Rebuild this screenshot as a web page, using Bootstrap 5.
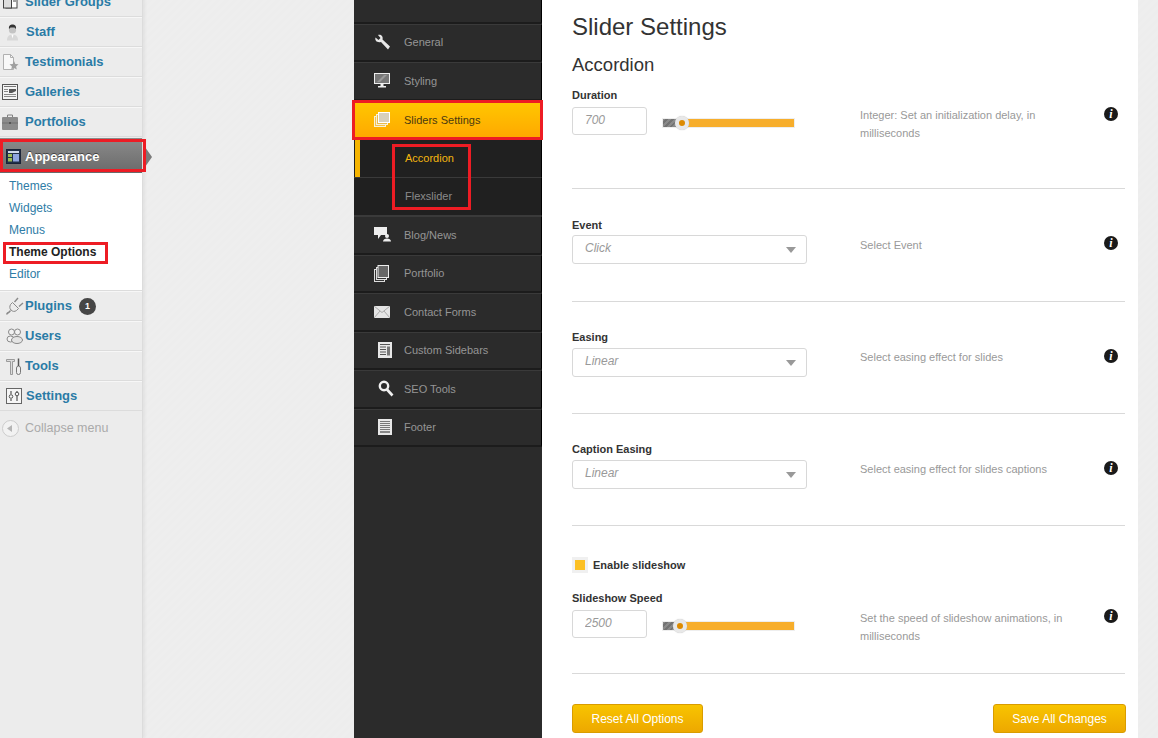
<!DOCTYPE html>
<html lang="en">
<head>
    <meta charset="UTF-8">
    <title>Theme Options - Slider Settings</title>
    <link href="https://cdn.jsdelivr.net/npm/bootstrap@5.3.2/dist/css/bootstrap.min.css" rel="stylesheet">
    <style>
        html, body { height: 738px; overflow: hidden; }
        body { font-family: "Liberation Sans", Arial, sans-serif; background: repeating-linear-gradient(135deg, #eeeeee 0 3px, #ededed 3px 6px); }
        .page-wrap { width: 1158px; height: 738px; }

        /* wp admin menu */
        .wp-side { width: 143px; flex: none; background: #ececec; border-right: 1px solid #dcdcdc; box-shadow: 2px 0 3px rgba(0,0,0,.05); margin-top: -13px; height: 751px; }
        .wp-item { height: 30px; display: flex; align-items: center; font-size: 13px; font-weight: bold; color: #2a7ba6; border-top: 1px solid #f7f7f7; border-bottom: 1px solid #dcdcdc; }
        .wp-ico { width: 25px; padding-left: 2px; flex: none; display: flex; }
        .wp-label { margin-left: 1px; }
        .wp-current { height: 35px; margin-top: 1px; padding-top: 2px; background: linear-gradient(#8b8b8b, #6a6a6a); color: #fff; border: 0; text-shadow: 0 -1px 0 #444; }
        .wp-sub { background: #fff; padding: 2px 0 5px; border-bottom: 1px solid #dcdcdc; }
        .wp-sub a { display: block; height: 22px; line-height: 22px; padding-left: 9px; font-size: 12px; color: #2e7ca6; text-decoration: none; }
        .wp-sub a.on { color: #222; font-weight: bold; }
        .wp-count { width: 17px; height: 17px; border-radius: 50%; background: #464646; color: #fff; font-size: 9px; line-height: 17px; text-align: center; margin-left: 7px; }
        .wp-collapse { font-size: 12.5px; font-weight: normal; color: #aaa; border: 0; height: 34px; }
        .wp-arrow { left: 145px; top: 147px; border-left: 7px solid #7b7b7b; border-top: 10px solid transparent; border-bottom: 10px solid transparent; }

        .mid-gap { width: 211px; flex: none; }

        /* theme nav */
        .opt-nav { width: 188px; flex: none; background: #2b2b2b; }
        .opt-nav-top { height: 23.6px; border-bottom: 2px solid #1c1c1c; border-right: 1px solid #000; }
        .opt-nav-row { height: 38.5px; display: flex; align-items: center; font-size: 11px; color: #959595; border-bottom: 2px solid #1c1c1c; border-top: 1px solid #3a3a3a; border-right: 1px solid #000; }
        .opt-nav-ico { width: 50px; padding-left: 20px; flex: none; display: flex; }
        .opt-nav-row.on { background: linear-gradient(#ffc800, #ffa700); color: #4a3a10; border: 0; }
        .opt-nav-sub { height: 38.5px; background: #202020; font-size: 11px; color: #8b8b8b; padding-left: 51px; display: flex; align-items: center; border-bottom: 1px solid #3a3a3a; border-right: 1px solid #000; }
        .opt-nav-sub.on { color: #f4b60f; box-shadow: inset 1px 0 0 #202020, inset 6px 0 0 #f5b400; }

        /* right panel */
        .opt-main { width: 596px; flex: none; background: #fff; padding: 0 13px 0 30px; }
        .opt-title { font-size: 24px; font-weight: normal; color: #333; line-height: 28px; margin: 13px 0 0; }
        .opt-sub { font-size: 18.5px; font-weight: normal; color: #333; line-height: 22px; margin: 13px 0 0; }
        .opt-block { border-bottom: 1px solid #d9d9d9; display: flex; position: relative; }
        .opt-left { width: 288px; flex: none; }
        .opt-desc { width: 210px; flex: none; font-size: 11px; line-height: 18px; color: #999; }
        .opt-label { font-size: 11px; font-weight: bold; color: #333; line-height: 14px; margin: 0 0 3px; display: block; }
        .opt-label.wide { margin-bottom: 5px; }
        .opt-label.mid { margin-bottom: 4px; }
        .opt-input.form-control { width: 75px; height: 28px; padding: 0 12px 2px; font-size: 12px; font-style: italic; color: #999; border: 1px solid #d8d8d8; border-radius: 3px; box-shadow: none; }
        .opt-slider { width: 131px; height: 8px; margin: 4px 0 0 16px; background: #f7ae2c; position: relative; box-shadow: 0 0 0 1px #eee; }
        .opt-slider-fill { height: 8px; background: repeating-linear-gradient(135deg, #8a8a8a 0 2px, #737373 2px 4px); }
        .opt-thumb { position: absolute; top: -3px; width: 14px; height: 14px; margin-left: -7px; border-radius: 50%; background: #dd8a00; border: 4px solid #e8e8e8; box-shadow: 0 0 1px #bbb; }
        .opt-select-wrap { width: 235px; position: relative; }
        .opt-select.form-select { height: 29px; padding: 0 12px 3px; font-size: 12px; font-style: italic; color: #999; border: 1px solid #d8d8d8; border-radius: 3px; background-image: none; box-shadow: none; }
        .opt-select-wrap::after { content: ""; position: absolute; right: 11px; top: 12px; border-top: 6px solid #999; border-left: 5px solid transparent; border-right: 5px solid transparent; }
        .opt-info { position: absolute; left: 532px; width: 14px; height: 14px; border-radius: 50%; background: #1a1a1a; color: #fff; font-family: "Liberation Serif", serif; font-style: italic; font-weight: bold; font-size: 12px; line-height: 14px; text-align: center; }
        .opt-check { width: 16px; height: 16px; background: #f0f0f0; display: flex; align-items: center; justify-content: center; margin-right: 5px; }
        .opt-check span { width: 10px; height: 10px; background: #fcc024; }
        .opt-check-row { font-size: 11px; font-weight: bold; color: #333; display: flex; align-items: center; margin-bottom: 17px; }
        .opt-btn.btn { height: 29px; padding: 0; font-size: 12px; color: #fff; background: linear-gradient(#f8c400, #eda800); border: 1px solid #d99c00; border-radius: 3px; }
        .opt-btn-row { margin-top: 30px; margin-right: -1px; }

        /* red annotation boxes */
        .mark-box { position: absolute; border: 3px solid #ed1c24; pointer-events: none; }
    </style>
</head>
<body>
<div class="page-wrap d-flex position-relative">

    <div class="wp-side">
        <div class="wp-item"><span class="wp-ico"><svg width="18" height="18" viewBox="0 0 18 18"><rect x="4" y="2" width="11" height="13" fill="#fff" stroke="#444"/><rect x="1.500" y="5" width="8" height="10" fill="#ddd" stroke="#444"/><path d="M11 5h3M11 8h3" stroke="#444"/></svg></span>Slider Groups</div>
        <div class="wp-item"><span class="wp-ico"><svg class="ms-1" width="13" height="17" viewBox="0 0 13 17"><path d="M1 16.500c0-4 1.500-5.500 5.500-6 4 .5 5.500 2 5.500 6z" fill="#d8d8d8"/><circle cx="6.500" cy="6" r="3.600" fill="#c4c4c4"/><path d="M3 5c-.5-3.500 1.500-4.500 3.500-4.500S10.500 1.500 10 5L8.500 3.500h-4z" fill="#333"/><path d="M5.500 10.500l1 4 1-4z" fill="#fff"/></svg></span><span class="wp-label">Staff</span></div>
        <div class="wp-item"><span class="wp-ico"><svg width="17" height="17" viewBox="0 0 17 17"><path d="M1.500.5h7l3 3v12h-10z" fill="#f8f8f8" stroke="#b0b0b0"/><path d="M8.500.5v3h3" fill="none" stroke="#b0b0b0"/><path d="M12 7l1.300 3 3.200.3-2.400 2.100.7 3.100-2.800-1.600-2.800 1.600.7-3.100-2.400-2.100 3.200-.3z" fill="#a0a0a0"/></svg></span>Testimonials</div>
        <div class="wp-item"><span class="wp-ico"><svg width="16" height="16" viewBox="0 0 16 16"><rect x=".5" y=".5" width="15" height="15" fill="#f4f4f4" stroke="#555"/><rect x="2" y="2" width="12" height="1" fill="#777"/><path d="M7 9V5h7v2l-4 2z" fill="#555"/><path d="M2 5.500h4M2 7.500h4M2 10.500h12M2 12.500h12" stroke="#888"/></svg></span>Galleries</div>
        <div class="wp-item"><span class="wp-ico"><svg width="16" height="16" viewBox="0 0 16 16"><path d="M5.500 3V1h5v2" fill="none" stroke="#808080"/><rect y="3" width="16" height="13" rx="1" fill="#8c8c8c"/><rect y="8.500" width="16" height="1" fill="#707070"/><rect x="7" y="8" width="2" height="2" fill="#555"/></svg></span>Portfolios</div>
        <div class="wp-item wp-current"><span class="wp-ico"><svg class="ms-1" width="15" height="15" viewBox="0 0 15 15"><rect x=".5" y=".5" width="14" height="14" fill="#20304a" stroke="#1a2438"/><rect x="2" y="2" width="11" height="2" fill="#cfd8ea"/><rect x="2" y="5" width="4" height="3" fill="#9cbb55"/><rect x="2" y="9" width="4" height="3.500" fill="#9cbb55"/><rect x="7" y="5" width="6" height="7.500" fill="#8fa5e0"/></svg></span>Appearance</div>
        <div class="wp-sub">
            <a href="#">Themes</a>
            <a href="#">Widgets</a>
            <a href="#">Menus</a>
            <a href="#" class="on">Theme Options</a>
            <a href="#">Editor</a>
        </div>
        <div class="wp-item"><span class="wp-ico"><svg class="ms-1" width="18" height="18" viewBox="0 0 18 18"><path d="M6.500 5.500l6 6-2 2c-2 1.500-4 1-5.500-.5S3.500 9.500 4.500 7.500z" fill="#ececec" stroke="#8a8a8a"/><path d="M8.500 5l3.500-4M13 9.500l4-3.500M4.500 13.500c-1 1-1 1.500-2 2s-1.500 1-2 2" fill="none" stroke="#8a8a8a" stroke-width="1.400"/></svg></span>Plugins<span class="wp-count">1</span></div>
        <div class="wp-item"><span class="wp-ico"><svg class="ms-1" width="17" height="16" viewBox="0 0 17 16"><circle cx="5.500" cy="4" r="3" fill="#f2f2f2" stroke="#888"/><circle cx="11.500" cy="4" r="3" fill="#f2f2f2" stroke="#888"/><ellipse cx="4.500" cy="11" rx="3.500" ry="3" fill="#f2f2f2" stroke="#888"/><ellipse cx="11" cy="12" rx="5.500" ry="3.500" fill="#e4e4e4" stroke="#888"/></svg></span>Users</div>
        <div class="wp-item"><span class="wp-ico"><svg class="ms-1" width="16" height="17" viewBox="0 0 16 17"><path d="M.5 1.500h8v2h-2v13h-2v-13h-4z" fill="#ddd" stroke="#888" stroke-width=".8"/><rect x="10.500" y="8" width="4" height="8.500" rx="2" fill="#eee" stroke="#777"/><path d="M12.500.5v7.500" stroke="#555" stroke-width="1.500"/></svg></span>Tools</div>
        <div class="wp-item"><span class="wp-ico"><svg class="ms-1" width="16" height="16" viewBox="0 0 16 16"><rect x=".5" y=".5" width="15" height="15" fill="#f6f6f6" stroke="#666"/><path d="M5 3v3M11 3v2M5 11v2M11 8v5" stroke="#555" stroke-width="1.200"/><circle cx="5" cy="8.500" r="1.800" fill="none" stroke="#555"/><circle cx="11" cy="6" r="1.800" fill="none" stroke="#555"/></svg></span><span class="wp-label">Settings</span></div>
        <div class="wp-item wp-collapse"><span class="wp-ico"><svg width="17" height="17" viewBox="0 0 17 17"><circle cx="8.500" cy="8.500" r="8" fill="#f2f2f2" stroke="#ccc"/><path d="M5 8.500l5-3.500v7z" fill="#b5b5b5"/></svg></span>Collapse menu</div>
    </div>
    <div class="wp-arrow position-absolute"></div>

    <div class="mid-gap"></div>

    <div class="opt-nav">
        <div class="opt-nav-top"></div>
        <div class="opt-nav-row"><span class="opt-nav-ico"><svg width="17" height="17" viewBox="0 0 17 17"><path d="M1.500 3.500l3 2.500 2-2-2.500-3c2.500-1 5.500 1 4.500 4.500l7.500 7-2 3-7-7.500C3 9 .5 6.500 1.500 3.500z" fill="#e8e8e8"/></svg></span>General</div>
        <div class="opt-nav-row"><span class="opt-nav-ico"><svg width="16" height="15" viewBox="0 0 16 15"><rect x=".5" y=".5" width="15" height="10" fill="#777" stroke="#eee"/><path d="M3 9l7-7h3l-7 7z" fill="#999"/><path d="M6.500 11h3v2h-3zM4 13h8v1.500H4z" fill="#eee"/></svg></span>Styling</div>
        <div class="opt-nav-row on"><span class="opt-nav-ico"><svg width="16" height="15" viewBox="0 0 16 15"><rect x=".5" y="4.500" width="11" height="10" fill="#f3c24e" stroke="#f7f0d8"/><rect x="2.500" y="2.500" width="11" height="10" fill="#e9bb4f" stroke="#f7f0d8"/><rect x="4.500" y=".5" width="11" height="10" fill="#d8d0bb" stroke="#fff"/></svg></span>Sliders Settings</div>
        <div class="opt-nav-sub on">Accordion</div>
        <div class="opt-nav-sub">Flexslider</div>
        <div class="opt-nav-row"><span class="opt-nav-ico"><svg width="17" height="15" viewBox="0 0 17 15"><path d="M0 0h13v8H7l-3 4V8H0z" fill="#ededed"/><circle cx="13" cy="9" r="2" fill="#ededed"/><path d="M9 14.500c0-4 8-4 8 0z" fill="#ededed"/></svg></span>Blog/News</div>
        <div class="opt-nav-row"><span class="opt-nav-ico"><svg width="15" height="17" viewBox="0 0 15 17"><rect x=".5" y="4.500" width="10" height="12" fill="#333" stroke="#ddd"/><rect x="2.500" y="2.500" width="10" height="12" fill="#333" stroke="#ddd"/><rect x="4" y=".5" width="10.500" height="12" fill="#666" stroke="#eee"/></svg></span>Portfolio</div>
        <div class="opt-nav-row"><span class="opt-nav-ico"><svg width="16" height="12" viewBox="0 0 16 12"><rect width="16" height="12" fill="#e4e4e4"/><path d="M0 0l8 6.500L16 0M0 12l6-7M16 12l-6-7" fill="none" stroke="#999" stroke-width=".8"/></svg></span>Contact Forms</div>
        <div class="opt-nav-row"><span class="opt-nav-ico"><svg class="ms-1" width="14" height="16" viewBox="0 0 14 16"><rect width="14" height="16" fill="#e8e8e8"/><path d="M2 2.500h10M2 5h6M2 7.500h6M2 10h6M2 12.500h6" stroke="#555"/><rect x="9" y="4.500" width="3" height="9" fill="#777"/></svg></span>Custom Sidebars</div>
        <div class="opt-nav-row"><span class="opt-nav-ico"><svg class="ms-1" width="16" height="17" viewBox="0 0 16 17"><circle cx="6" cy="6" r="4.200" fill="none" stroke="#f0f0f0" stroke-width="2.400"/><path d="M9 9.500l5.500 6" stroke="#f0f0f0" stroke-width="2.600"/></svg></span>SEO Tools</div>
        <div class="opt-nav-row"><span class="opt-nav-ico"><svg class="ms-1" width="14" height="16" viewBox="0 0 14 16"><rect width="14" height="16" fill="#e8e8e8"/><path d="M2 2.500h10M2 4.500h10M2 6.500h10M2 8.500h10M2 10.500h10" stroke="#777"/><rect x="2" y="12" width="10" height="2" fill="#888"/></svg></span>Footer</div>
    </div>

    <div class="opt-main">
        <h1 class="opt-title">Slider Settings</h1>
        <h2 class="opt-sub">Accordion</h2>

        <div class="opt-block" style="height:113px;padding-top:12px">
            <div class="opt-left">
                <label class="opt-label wide">Duration</label>
                <div class="d-flex align-items-center">
                    <input class="form-control opt-input" value="700">
                    <div class="opt-slider"><div class="opt-slider-fill" style="width:19px"></div><div class="opt-thumb" style="left:19px"></div></div>
                </div>
            </div>
            <div class="opt-desc" style="padding-top:18px">Integer: Set an initialization delay, in milliseconds</div>
            <div class="opt-info" style="top:31px">i</div>
        </div>

        <div class="opt-block" style="height:113px;padding-top:29px">
            <div class="opt-left">
                <label class="opt-label">Event</label>
                <div class="opt-select-wrap"><select class="form-select opt-select"><option>Click</option></select></div>
            </div>
            <div class="opt-desc" style="padding-top:18px">Select Event</div>
            <div class="opt-info" style="top:47px">i</div>
        </div>

        <div class="opt-block" style="height:112px;padding-top:28px">
            <div class="opt-left">
                <label class="opt-label mid">Easing</label>
                <div class="opt-select-wrap"><select class="form-select opt-select"><option>Linear</option></select></div>
            </div>
            <div class="opt-desc" style="padding-top:18px">Select easing effect for slides</div>
            <div class="opt-info" style="top:47px">i</div>
        </div>

        <div class="opt-block" style="height:112px;padding-top:28px">
            <div class="opt-left">
                <label class="opt-label mid">Caption Easing</label>
                <div class="opt-select-wrap"><select class="form-select opt-select"><option>Linear</option></select></div>
            </div>
            <div class="opt-desc" style="padding-top:18px">Select easing effect for slides captions</div>
            <div class="opt-info" style="top:47px">i</div>
        </div>

        <div class="opt-block" style="height:148px;padding-top:31px">
            <div class="opt-left">
                <div class="opt-check-row"><div class="opt-check"><span></span></div>Enable slideshow</div>
                <label class="opt-label wide">Slideshow Speed</label>
                <div class="d-flex align-items-center">
                    <input class="form-control opt-input" value="2500">
                    <div class="opt-slider"><div class="opt-slider-fill" style="width:17px"></div><div class="opt-thumb" style="left:17px"></div></div>
                </div>
            </div>
            <div class="opt-desc" style="padding-top:52px">Set the speed of slideshow animations, in milliseconds</div>
            <div class="opt-info" style="top:83px">i</div>
        </div>

        <div class="d-flex justify-content-between opt-btn-row">
            <button class="btn opt-btn" style="width:131px">Reset All Options</button>
            <button class="btn opt-btn" style="width:133px">Save All Changes</button>
        </div>
    </div>

    <!-- red marks from the screenshot -->
    <div class="mark-box" style="left:0;top:139px;width:146px;height:33px"></div>
    <div class="mark-box" style="left:3px;top:242px;width:105px;height:22px"></div>
    <div class="mark-box" style="left:352px;top:100px;width:191px;height:40px"></div>
    <div class="mark-box" style="left:392px;top:144px;width:79px;height:66px"></div>
</div>
<script src="https://cdn.jsdelivr.net/npm/bootstrap@5.3.2/dist/js/bootstrap.bundle.min.js"></script>
</body>
</html>
